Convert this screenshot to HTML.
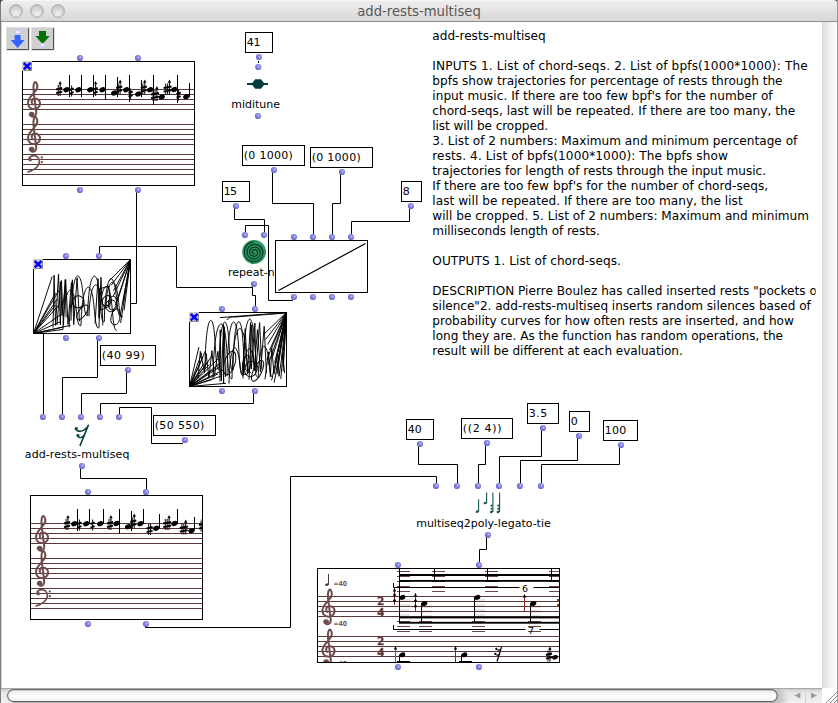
<!DOCTYPE html>
<html><head><meta charset="utf-8"><title>add-rests-multiseq</title>
<style>
html,body{margin:0;padding:0;background:#fff;}
body{width:838px;height:703px;overflow:hidden;}
svg{display:block;}
text{white-space:pre;}
</style></head><body>
<svg width="838" height="703" viewBox="0 0 838 703">
<defs>
<radialGradient id="dg" cx="0.6" cy="0.4" r="0.68">
<stop offset="0" stop-color="#c8c8fb"/><stop offset="0.3" stop-color="#8e8ee9"/><stop offset="0.7" stop-color="#7575d2"/><stop offset="1" stop-color="#6262bd"/>
</radialGradient>
<linearGradient id="tb" x1="0" y1="0" x2="0" y2="1">
<stop offset="0" stop-color="#efefef"/><stop offset="1" stop-color="#d7d7d7"/>
</linearGradient>
<radialGradient id="tl" cx="0.5" cy="0.75" r="0.7">
<stop offset="0" stop-color="#f2f2f2"/><stop offset="1" stop-color="#c4c4c4"/>
</radialGradient>
<linearGradient id="vs" x1="0" y1="0" x2="1" y2="0">
<stop offset="0" stop-color="#dadada"/><stop offset="0.6" stop-color="#f4f4f4"/><stop offset="1" stop-color="#fafafa"/>
</linearGradient>
<linearGradient id="hs" x1="0" y1="0" x2="0" y2="1">
<stop offset="0" stop-color="#c4c4c4"/><stop offset="0.3" stop-color="#e6e6e6"/><stop offset="1" stop-color="#f1f1f1"/>
</linearGradient>
<linearGradient id="pill" x1="0" y1="0" x2="0" y2="1">
<stop offset="0" stop-color="#e4e4e4"/><stop offset="0.3" stop-color="#f4f4f4"/><stop offset="0.55" stop-color="#ffffff"/><stop offset="1" stop-color="#efefef"/>
</linearGradient>
<linearGradient id="cap" x1="0" y1="0" x2="1" y2="0">
<stop offset="0" stop-color="#b4b4b4"/><stop offset="0.45" stop-color="#c6c6c6"/><stop offset="1" stop-color="#ececec"/>
</linearGradient>
<clipPath id="cpTxt"><rect x="425" y="22" width="390.7" height="400"/></clipPath>
<clipPath id="cpS1"><rect x="23" y="62" width="171" height="123"/></clipPath>
<clipPath id="cpS2"><rect x="31" y="496" width="171" height="123"/></clipPath>
<clipPath id="cpV"><rect x="318" y="569" width="241" height="93"/></clipPath>
<clipPath id="cpB1"><rect x="34" y="260" width="97" height="73"/></clipPath>
<clipPath id="cpB2"><rect x="190" y="313" width="97" height="73"/></clipPath>
<clipPath id="cpRn"><rect x="220" y="262" width="54.2" height="20"/></clipPath>
</defs>
<rect x="0" y="0" width="838" height="703" fill="#fff"/>
<rect x="0" y="0" width="838" height="21" fill="url(#tb)"/>
<rect x="0" y="0" width="838" height="1" fill="#f6f6f6"/>
<rect x="0" y="21" width="838" height="1" fill="#8e8e8e"/>
<circle cx="16" cy="11" r="6.3" fill="url(#tl)" stroke="#a9a9a9" stroke-width="1"/>
<circle cx="37" cy="11" r="6.3" fill="url(#tl)" stroke="#a9a9a9" stroke-width="1"/>
<circle cx="58" cy="11" r="6.3" fill="url(#tl)" stroke="#a9a9a9" stroke-width="1"/>
<text x="419" y="15.5" font-family="'DejaVu Sans','Liberation Sans',sans-serif" font-size="13.2" fill="#585858" text-anchor="middle">add-rests-multiseq</text>
<rect x="0" y="0" width="1" height="703" fill="#7c7c7c"/>
<rect x="1" y="22" width="1" height="666" fill="#d8d8d8"/>
<path d="M0 0 H4.5 A4.5 4.5 0 0 0 0 4.5 Z" fill="#444"/>
<path d="M838 0 H833.5 A4.5 4.5 0 0 1 838 4.5 Z" fill="#444"/>
<rect x="822" y="22" width="15" height="666" fill="url(#vs)"/>
<rect x="837" y="0" width="1" height="703" fill="#9a9a9a"/>
<rect x="1" y="688" width="821" height="15" fill="url(#hs)"/>
<rect x="1" y="688" width="821" height="1" fill="#a8a8a8"/>
<path d="M770 689 H783 A7 7 0 0 1 783 703 H770 Z" fill="url(#cap)"/>
<rect x="7.6" y="689.6" width="769.6" height="12" rx="6" ry="6" fill="url(#pill)" stroke="#6e6e6e" stroke-width="1.2"/>
<path d="M13 701.8 H771" stroke="#5c5c5c" stroke-width="0.8" fill="none"/>
<path d="M794.4 695.6 L800.4 692.6 V698.6 Z" fill="#9c9c9c"/>
<path d="M817 695.6 L811 692.6 V698.6 Z" fill="#9c9c9c"/>
<rect x="805" y="689" width="1" height="14" fill="#d4d4d4"/>
<rect x="822" y="688" width="15" height="15" fill="#fff"/>
<path d="M826 703 L837 692" stroke="#8a8a8a" stroke-width="1" fill="none"/>
<path d="M830 703 L837 696" stroke="#8a8a8a" stroke-width="1" fill="none"/>
<path d="M834 703 L837 700" stroke="#8a8a8a" stroke-width="1" fill="none"/>
<rect x="6" y="27" width="24" height="24" fill="#e2e2e2"/>
<rect x="7" y="28" width="22" height="22" fill="#d0d0d0"/>
<path d="M6.5 49.5 V27.5 H28.5" fill="none" stroke="#dedede" stroke-width="1"/>
<path d="M7 49.5 H28.5 V28" fill="none" stroke="#505050" stroke-width="1"/>
<rect x="31" y="27" width="24" height="24" fill="#e2e2e2"/>
<rect x="32" y="28" width="22" height="22" fill="#d0d0d0"/>
<path d="M31.5 49.5 V27.5 H53.5" fill="none" stroke="#dedede" stroke-width="1"/>
<path d="M32 49.5 H53.5 V28" fill="none" stroke="#505050" stroke-width="1"/>
<circle cx="17.6" cy="32" r="2.6" fill="#c9c9ff"/><circle cx="17.6" cy="32" r="1.3" fill="#fff"/>
<path d="M14.6 35 H20.6 V40 H24.6 L17.6 48 L10.6 40 H14.6 Z" fill="#3366ff"/>
<path d="M39 31 H46 V36 H49.8 L42.6 44 L35.4 36 H39 Z" fill="#007300"/>
<circle cx="42.6" cy="45.3" r="2.6" fill="#c9c9ff"/><circle cx="42.6" cy="45.3" r="1.3" fill="#fff"/>
<path d="M136.5 190.5 L136.5 303.5 L43.5 303.5 L43.5 416.5" fill="none" stroke="#000" stroke-width="1" stroke-linejoin="miter" stroke-linecap="square"/>
<path d="M99.5 255.5 L99.5 246.5 L176.5 246.5 L176.5 287.5 L252.5 287.5 L252.5 284.5" fill="none" stroke="#000" stroke-width="1" stroke-linejoin="miter" stroke-linecap="square"/>
<path d="M252.5 287.5 L252.5 295.5 L255.5 295.5 L255.5 308.5" fill="none" stroke="#000" stroke-width="1" stroke-linejoin="miter" stroke-linecap="square"/>
<path d="M234.5 206.5 L234.5 219.5 L264.5 219.5 L264.5 234.5" fill="none" stroke="#000" stroke-width="1" stroke-linejoin="miter" stroke-linecap="square"/>
<path d="M245.5 234.5 L245.5 225.5 L268.5 225.5 L268.5 300.5 L292.5 300.5 L292.5 298.5" fill="none" stroke="#000" stroke-width="1" stroke-linejoin="miter" stroke-linecap="square"/>
<path d="M272.5 170.5 L272.5 203.5 L313.5 203.5 L313.5 236.5" fill="none" stroke="#000" stroke-width="1" stroke-linejoin="miter" stroke-linecap="square"/>
<path d="M340.5 172.5 L340.5 203.5 L332.5 203.5 L332.5 236.5" fill="none" stroke="#000" stroke-width="1" stroke-linejoin="miter" stroke-linecap="square"/>
<path d="M409.5 206.5 L409.5 221.5 L351.5 221.5 L351.5 236.5" fill="none" stroke="#000" stroke-width="1" stroke-linejoin="miter" stroke-linecap="square"/>
<path d="M97.5 338.5 L97.5 377.5 L62.5 377.5 L62.5 416.5" fill="none" stroke="#000" stroke-width="1" stroke-linejoin="miter" stroke-linecap="square"/>
<path d="M126.5 370.5 L126.5 393.5 L81.5 393.5 L81.5 416.5" fill="none" stroke="#000" stroke-width="1" stroke-linejoin="miter" stroke-linecap="square"/>
<path d="M253.5 391.5 L253.5 403.5 L100.5 403.5 L100.5 416.5" fill="none" stroke="#000" stroke-width="1" stroke-linejoin="miter" stroke-linecap="square"/>
<path d="M182.5 443.5 L151.5 443.5 L151.5 407.5 L119.5 407.5 L119.5 416.5" fill="none" stroke="#000" stroke-width="1" stroke-linejoin="miter" stroke-linecap="square"/>
<path d="M80.5 466.5 L80.5 478.5 L146.5 478.5 L146.5 491.5" fill="none" stroke="#000" stroke-width="1" stroke-linejoin="miter" stroke-linecap="square"/>
<path d="M145.5 627.5 L290.5 627.5 L290.5 476.5 L436.5 476.5 L436.5 482.5" fill="none" stroke="#000" stroke-width="1" stroke-linejoin="miter" stroke-linecap="square"/>
<path d="M418.5 444.5 L418.5 464.5 L457.5 464.5 L457.5 482.5" fill="none" stroke="#000" stroke-width="1" stroke-linejoin="miter" stroke-linecap="square"/>
<path d="M485.5 443.5 L485.5 464.5 L478.5 464.5 L478.5 482.5" fill="none" stroke="#000" stroke-width="1" stroke-linejoin="miter" stroke-linecap="square"/>
<path d="M541.5 428.5 L541.5 456.5 L499.5 456.5 L499.5 482.5" fill="none" stroke="#000" stroke-width="1" stroke-linejoin="miter" stroke-linecap="square"/>
<path d="M577.5 436.5 L577.5 460.5 L520.5 460.5 L520.5 482.5" fill="none" stroke="#000" stroke-width="1" stroke-linejoin="miter" stroke-linecap="square"/>
<path d="M619.5 445.5 L619.5 464.5 L541.5 464.5 L541.5 482.5" fill="none" stroke="#000" stroke-width="1" stroke-linejoin="miter" stroke-linecap="square"/>
<path d="M486.5 535.5 L486.5 549.5 L479.5 549.5 L479.5 562.5" fill="none" stroke="#000" stroke-width="1" stroke-linejoin="miter" stroke-linecap="square"/>
<path d="M258.5 61.5 L258.5 62.5" fill="none" stroke="#000" stroke-width="1" stroke-linejoin="miter" stroke-linecap="square"/>
<rect x="245.5" y="32.5" width="27" height="20" fill="#fff" stroke="#000" stroke-width="1"/>
<text x="246.7" y="45.8" font-family="'DejaVu Sans','Liberation Sans',sans-serif" font-size="11" fill="#000" textLength="13.9" lengthAdjust="spacing">41</text>
<rect x="242.5" y="145.5" width="62" height="20" fill="#fff" stroke="#000" stroke-width="1"/>
<text x="243.7" y="158.8" font-family="'DejaVu Sans','Liberation Sans',sans-serif" font-size="11" fill="#000" textLength="49.2" lengthAdjust="spacing">(0 1000)</text>
<rect x="310.5" y="147.5" width="62" height="20" fill="#fff" stroke="#000" stroke-width="1"/>
<text x="311.7" y="160.8" font-family="'DejaVu Sans','Liberation Sans',sans-serif" font-size="11" fill="#000" textLength="49.0" lengthAdjust="spacing">(0 1000)</text>
<rect x="222.5" y="181.5" width="27" height="20" fill="#fff" stroke="#000" stroke-width="1"/>
<text x="223.7" y="194.8" font-family="'DejaVu Sans','Liberation Sans',sans-serif" font-size="11" fill="#000" textLength="13.3" lengthAdjust="spacing">15</text>
<rect x="401.5" y="181.5" width="20" height="20" fill="#fff" stroke="#000" stroke-width="1"/>
<text x="402.7" y="194.8" font-family="'DejaVu Sans','Liberation Sans',sans-serif" font-size="11" fill="#000" textLength="7.8" lengthAdjust="spacing">8</text>
<rect x="100.5" y="345.5" width="55" height="20" fill="#fff" stroke="#000" stroke-width="1"/>
<text x="101.7" y="358.8" font-family="'DejaVu Sans','Liberation Sans',sans-serif" font-size="11" fill="#000" textLength="43.0" lengthAdjust="spacing">(40 99)</text>
<rect x="153.5" y="415.5" width="62" height="20" fill="#fff" stroke="#000" stroke-width="1"/>
<text x="154.7" y="428.8" font-family="'DejaVu Sans','Liberation Sans',sans-serif" font-size="11" fill="#000" textLength="49.6" lengthAdjust="spacing">(50 550)</text>
<rect x="406.5" y="419.5" width="27" height="20" fill="#fff" stroke="#000" stroke-width="1"/>
<text x="407.7" y="432.8" font-family="'DejaVu Sans','Liberation Sans',sans-serif" font-size="11" fill="#000" textLength="14.1" lengthAdjust="spacing">40</text>
<rect x="461.5" y="418.5" width="51" height="20" fill="#fff" stroke="#000" stroke-width="1"/>
<text x="462.7" y="431.8" font-family="'DejaVu Sans','Liberation Sans',sans-serif" font-size="11" fill="#000" textLength="38.9" lengthAdjust="spacing">((2 4))</text>
<rect x="527.5" y="403.5" width="31" height="20" fill="#fff" stroke="#000" stroke-width="1"/>
<text x="528.7" y="416.8" font-family="'DejaVu Sans','Liberation Sans',sans-serif" font-size="11" fill="#000" textLength="18.6" lengthAdjust="spacing">3.5</text>
<rect x="569.5" y="411.5" width="20" height="20" fill="#fff" stroke="#000" stroke-width="1"/>
<text x="570.7" y="424.8" font-family="'DejaVu Sans','Liberation Sans',sans-serif" font-size="11" fill="#000" textLength="7.8" lengthAdjust="spacing">0</text>
<rect x="603.5" y="420.5" width="34" height="20" fill="#fff" stroke="#000" stroke-width="1"/>
<text x="604.7" y="433.8" font-family="'DejaVu Sans','Liberation Sans',sans-serif" font-size="11" fill="#000" textLength="21.5" lengthAdjust="spacing">100</text>
<path d="M247 84 H268" stroke="#003c3c" stroke-width="2" fill="none"/>
<path d="M251.4 84 L255.2 79.2 H261 L264.8 84 L261 88.8 H255.2 Z" fill="#003c3c"/>
<text x="231.2" y="107.7" font-family="'DejaVu Sans','Liberation Sans',sans-serif" font-size="11" fill="#000" text-anchor="start" >miditune</text>
<circle cx="254.1" cy="252" r="11.9" fill="#2f9560"/>
<path d="M254.73 253.42 L254.69 253.45 L254.64 253.49 L254.59 253.52 L254.54 253.55 L254.49 253.58 L254.44 253.60 L254.38 253.63 L254.32 253.65 L254.26 253.67 L254.20 253.68 L254.13 253.69 L254.07 253.70 L254.00 253.71 L253.93 253.71 L253.87 253.71 L253.80 253.71 L253.73 253.70 L253.66 253.69 L253.59 253.68 L253.52 253.66 L253.45 253.64 L253.38 253.62 L253.31 253.59 L253.24 253.56 L253.17 253.52 L253.11 253.49 L253.04 253.44 L252.98 253.40 L252.91 253.35 L252.85 253.30 L252.79 253.24 L252.74 253.18 L252.68 253.12 L252.63 253.06 L252.58 252.99 L252.53 252.92 L252.49 252.84 L252.45 252.77 L252.41 252.69 L252.38 252.60 L252.35 252.52 L252.32 252.43 L252.30 252.35 L252.28 252.26 L252.27 252.17 L252.26 252.07 L252.25 251.98 L252.25 251.88 L252.25 251.79 L252.26 251.69 L252.27 251.60 L252.29 251.50 L252.31 251.40 L252.33 251.31 L252.36 251.21 L252.40 251.12 L252.44 251.02 L252.48 250.93 L252.53 250.84 L252.58 250.75 L252.64 250.66 L252.70 250.57 L252.77 250.49 L252.84 250.41 L252.91 250.33 L252.99 250.25 L253.08 250.18 L253.16 250.11 L253.26 250.05 L253.35 249.99 L253.45 249.93 L253.55 249.87 L253.65 249.83 L253.76 249.78 L253.87 249.74 L253.98 249.71 L254.10 249.68 L254.21 249.65 L254.33 249.63 L254.45 249.62 L254.57 249.61 L254.70 249.60 L254.82 249.61 L254.94 249.61 L255.07 249.63 L255.19 249.65 L255.32 249.67 L255.44 249.70 L255.56 249.74 L255.68 249.78 L255.80 249.83 L255.92 249.88 L256.04 249.94 L256.16 250.01 L256.27 250.08 L256.38 250.16 L256.49 250.24 L256.59 250.33 L256.69 250.42 L256.79 250.52 L256.88 250.62 L256.97 250.73 L257.05 250.84 L257.13 250.95 L257.21 251.07 L257.27 251.20 L257.34 251.33 L257.40 251.46 L257.45 251.59 L257.50 251.73 L257.54 251.87 L257.57 252.02 L257.60 252.16 L257.62 252.31 L257.64 252.46 L257.64 252.61 L257.64 252.76 L257.64 252.91 L257.63 253.06 L257.61 253.22 L257.58 253.37 L257.55 253.52 L257.51 253.67 L257.46 253.82 L257.40 253.97 L257.34 254.12 L257.28 254.26 L257.20 254.40 L257.12 254.54 L257.03 254.68 L256.93 254.81 L256.83 254.94 L256.72 255.06 L256.61 255.18 L256.49 255.30 L256.37 255.41 L256.23 255.51 L256.10 255.61 L255.96 255.70 L255.81 255.79 L255.66 255.87 L255.51 255.95 L255.35 256.02 L255.18 256.08 L255.02 256.13 L254.85 256.18 L254.68 256.22 L254.50 256.25 L254.33 256.27 L254.15 256.29 L253.97 256.30 L253.79 256.29 L253.61 256.29 L253.43 256.27 L253.25 256.25 L253.07 256.21 L252.89 256.17 L252.71 256.12 L252.53 256.06 L252.36 256.00 L252.19 255.92 L252.02 255.84 L251.85 255.75 L251.69 255.65 L251.53 255.55 L251.37 255.43 L251.22 255.31 L251.08 255.18 L250.94 255.05 L250.80 254.91 L250.68 254.76 L250.55 254.61 L250.44 254.45 L250.33 254.28 L250.23 254.11 L250.13 253.93 L250.05 253.75 L249.97 253.56 L249.90 253.37 L249.84 253.18 L249.78 252.98 L249.74 252.78 L249.70 252.58 L249.68 252.38 L249.66 252.17 L249.65 251.96 L249.65 251.75 L249.66 251.54 L249.68 251.33 L249.71 251.12 L249.75 250.91 L249.80 250.71 L249.86 250.50 L249.93 250.30 L250.01 250.10 L250.09 249.90 L250.19 249.70 L250.29 249.51 L250.41 249.32 L250.53 249.14 L250.66 248.96 L250.80 248.79 L250.95 248.62 L251.10 248.46 L251.26 248.31 L251.43 248.16 L251.61 248.02 L251.80 247.89 L251.99 247.77 L252.18 247.65 L252.39 247.55 L252.59 247.45 L252.81 247.36 L253.02 247.28 L253.25 247.21 L253.47 247.15 L253.70 247.10 L253.93 247.06 L254.16 247.03 L254.40 247.01 L254.64 247.00 L254.87 247.00 L255.11 247.01 L255.35 247.04 L255.59 247.07 L255.83 247.12 L256.06 247.17 L256.30 247.24 L256.53 247.32 L256.76 247.40 L256.98 247.50 L257.20 247.61 L257.42 247.73 L257.63 247.86 L257.84 248.00 L258.04 248.14 L258.23 248.30 L258.42 248.47 L258.60 248.64 L258.78 248.83 L258.94 249.02 L259.10 249.22 L259.25 249.43 L259.39 249.64 L259.52 249.86 L259.64 250.09 L259.75 250.33 L259.85 250.57 L259.94 250.81 L260.02 251.06 L260.08 251.31 L260.14 251.57 L260.19 251.83 L260.22 252.09 L260.24 252.36 L260.25 252.62 L260.25 252.89 L260.24 253.16 L260.21 253.42 L260.17 253.69 L260.12 253.96 L260.06 254.22 L259.99 254.48 L259.90 254.74 L259.80 255.00 L259.69 255.25 L259.57 255.49 L259.44 255.74 L259.30 255.97 L259.14 256.21 L258.98 256.43 L258.80 256.65 L258.62 256.86 L258.42 257.06 L258.22 257.25 L258.00 257.44 L257.78 257.61 L257.55 257.78 L257.31 257.94 L257.07 258.08 L256.81 258.22 L256.55 258.34 L256.29 258.45 L256.02 258.55 L255.74 258.64 L255.46 258.72 L255.17 258.78 L254.88 258.83 L254.59 258.87 L254.30 258.89 L254.01 258.91 L253.71 258.90 L253.41 258.89 L253.12 258.86 L252.82 258.82 L252.53 258.77 L252.23 258.70 L251.94 258.62 L251.66 258.52 L251.38 258.42 L251.10 258.30 L250.82 258.16 L250.55 258.02 L250.29 257.86 L250.04 257.69 L249.79 257.51 L249.55 257.32 L249.32 257.11 L249.09 256.90 L248.88 256.67 L248.67 256.44 L248.48 256.19 L248.29 255.94 L248.12 255.68 L247.96 255.41 L247.81 255.13 L247.67 254.84 L247.55 254.55 L247.44 254.25 L247.34 253.95 L247.26 253.64 L247.18 253.33 L247.13 253.01 L247.08 252.69 L247.06 252.37 L247.04 252.05 L247.04 251.72 L247.06 251.39 L247.08 251.07 L247.13 250.74 L247.19 250.42 L247.26 250.10 L247.35 249.78 L247.45 249.47 L247.57 249.16 L247.70 248.85 L247.84 248.55 L248.00 248.26 L248.17 247.97 L248.35 247.69 L248.55 247.42 L248.76 247.15 L248.98 246.90 L249.22 246.65 L249.46 246.42 L249.72 246.19 L249.99 245.98 L250.26 245.78 L250.55 245.59 L250.84 245.41 L251.15 245.24 L251.46 245.09 L251.77 244.96 L252.10 244.83 L252.43 244.72 L252.77 244.63 L253.11 244.55 L253.45 244.49 L253.80 244.44 L254.15 244.41 L254.50 244.39 L254.86 244.39 L255.21 244.40 L255.57 244.43 L255.92 244.48 L256.27 244.54 L256.62 244.62 L256.97 244.71 L257.31 244.82 L257.65 244.94 L257.98 245.08 L258.31 245.24 L258.63 245.41 L258.94 245.59 L259.25 245.79 L259.55 246.01 L259.83 246.23 L260.11 246.47 L260.38 246.72 L260.64 246.99 L260.88 247.27 L261.12 247.55 L261.34 247.85 L261.54 248.16 L261.74 248.48 L261.92 248.81 L262.08 249.14 L262.23 249.49 L262.37 249.84 L262.49 250.20 L262.59 250.56 L262.68 250.93 L262.75 251.30 L262.81 251.68 L262.84 252.06 L262.86 252.44 L262.87 252.82 L262.85 253.21 L262.82 253.59 L262.78 253.97 L262.71 254.35 L262.63 254.73 L262.53 255.11 L262.41 255.48 L262.28 255.84 L262.13 256.20 L261.97 256.56 L261.79 256.91 L261.59 257.25 L261.38 257.58 L261.15 257.90 L260.90 258.21 L260.65 258.51 L260.38 258.80 L260.09 259.08 L259.80 259.35 L259.49 259.60 L259.17 259.84 L258.83 260.07 L258.49 260.28 L258.14 260.47 L257.78 260.65 L257.41 260.82 L257.03 260.97 L256.65 261.10 L256.26 261.21 L255.86 261.31 L255.46 261.39 L255.06 261.45 L254.65 261.49 L254.24 261.52 L253.83 261.52 L253.41 261.51 L253.00 261.48 L252.59 261.43 L252.18 261.36 L251.77 261.28 L251.37 261.17 L250.97 261.05 L250.57 260.91 L250.19 260.75 L249.80 260.58 L249.43 260.39 L249.06 260.18 L248.71 259.95 L248.36 259.71 L248.02 259.45 L247.70 259.18 L247.38 258.89 L247.08 258.58 L246.79 258.27 L246.52 257.94 L246.26 257.60 L246.02 257.24 L245.79 256.88 L245.58 256.50 L245.38 256.11 L245.20 255.72 L245.04 255.32 L244.90 254.90 L244.77 254.49 L244.67 254.06 L244.58 253.63 L244.51 253.20 L244.46 252.76 L244.43 252.33 L244.42 251.88 L244.43 251.44 L244.46 251.00 L244.51 250.56 L244.58 250.12 L244.67 249.69 L244.78 249.25 L244.91 248.83 L245.05 248.40 L245.22 247.99 L245.40 247.58 L245.61 247.18 L245.83 246.78 L246.07 246.40 L246.33 246.03 L246.60 245.66 L246.89 245.32 L247.19 244.98 L247.52 244.65 L247.85 244.35 L248.20 244.05 L248.57 243.77 L248.94 243.51 L249.33 243.26 L249.73 243.03 L250.14 242.82 L250.56 242.63 L250.99 242.45 L251.43 242.30 L251.87 242.16 L252.32 242.04 L252.78 241.95 L253.24 241.87 L253.71 241.82" fill="none" stroke="#063a20" stroke-width="1.25"/>
<path d="M251.2 262.6 l1.6 1.4" stroke="#083c22" stroke-width="1"/>
<g clip-path="url(#cpRn)"><text x="228" y="275.6" font-family="'DejaVu Sans','Liberation Sans',sans-serif" font-size="11" fill="#000">repeat-n</text></g>
<rect x="275.5" y="240.5" width="92" height="52" fill="#fff" stroke="#000" stroke-width="1"/>
<path d="M278.5 290.5 L365.5 243.5" stroke="#000" stroke-width="1.2" fill="none"/>
<rect x="33.5" y="259.5" width="97" height="74" fill="#fff" stroke="#000" stroke-width="1"/>
<g clip-path="url(#cpB1)" fill="none" stroke="#000" stroke-width="0.95" stroke-linejoin="round">
<path d="M33.5 333.5 L52.2 276.5 M33.5 333.5 L55.6 292.9 M33.5 333.5 L57.5 298.8 M33.5 333.5 L58.1 305.9 M33.5 333.5 L58.9 290.3 M33.5 333.5 L62.8 327.2 M33.5 333.5 L60.9 321.5 M33.5 333.5 L60.1 315.1 M33.5 333.5 L63.0 329.4 M33.5 333.5 L55.6 304.8 M33.5 333.5 L70.5 325.3 M130.5 259.5 L108.6 281.3 M130.5 259.5 L111.2 285.3 M130.5 259.5 L113.0 296.7 M130.5 259.5 L115.4 305.4 M130.5 259.5 L120.0 316.7 M130.5 259.5 L120.6 322.9 M130.5 259.5 L124.1 310.4 M130.5 259.5 L117.4 300.9 M130.5 259.5 L113.4 290.9 M130.5 259.5 L122.8 303.6 "/>
<path d="M53.0 327.6 L54.1 275.2 L55.6 325.4 L58.5 274.0 L60.4 324.9 L61.4 280.5 L63.5 325.2 L65.2 279.6 L66.1 317.3 "/>
<path d="M57.0 324.9 L60.5 281.8 L62.0 315.5 L65.7 279.6 L68.0 324.4 L71.4 282.6 L74.4 315.9 "/>
<path d="M69.0 327.3 L72.4 279.8 L73.7 324.7 L77.1 277.9 L79.5 321.4 "/>
<path d="M71.0 320.7 C71.8 275.2 77.7 273.2 79.3 277.2 C84.3 283.2 82.7 318.5 87.7 315.5 C88.5 275.5 94.3 273.5 96.0 277.5 C101.0 283.5 99.3 324.6 104.3 321.6 C105.2 278.1 111.0 276.1 112.7 280.1 C117.7 286.1 116.0 318.8 121.0 315.8 "/>
<path d="M63.0 329.3 C63.9 289.6 70.2 287.6 72.0 291.6 C77.4 297.6 75.6 328.5 81.0 325.5 C81.9 286.6 88.2 284.6 90.0 288.6 C95.4 294.6 93.6 330.8 99.0 327.8 C99.9 285.9 106.2 283.9 108.0 287.9 C113.4 293.9 111.6 333.2 117.0 330.2 "/>
<path d="M89.0 316.3 C89.8 284.4 95.8 282.4 97.5 286.4 C102.6 292.4 100.9 310.0 106.0 307.0 C106.8 281.8 112.8 279.8 114.5 283.8 C119.6 289.8 117.9 319.5 123.0 316.5 "/>
<ellipse cx="112.5" cy="303.0" rx="4.1" ry="6.9" transform="rotate(7 112.5 303.0)"/>
<ellipse cx="106.7" cy="300.7" rx="4.2" ry="5.4" transform="rotate(29 106.7 300.7)"/>
<ellipse cx="78.2" cy="301.8" rx="5.9" ry="6.0" transform="rotate(16 78.2 301.8)"/>
<ellipse cx="111.2" cy="305.9" rx="5.7" ry="5.9" transform="rotate(-5 111.2 305.9)"/>
<ellipse cx="82.4" cy="312.3" rx="3.7" ry="8.6" transform="rotate(35 82.4 312.3)"/>
<path d="M95.0 323.6 L98.0 278.6 L99.0 318.2 L101.0 277.3 L102.8 325.2 "/>
<path d="M113 311 q6 -6 7 4 q0 10 -6 10 q-6 -2 -1 -14"/>
<path d="M99 289 l10 -3 l1 20 l-9 4 Z"/>
</g>
<rect x="33" y="259" width="10" height="10" fill="#cdcdcd"/>
<path d="M42.5 260 V268.5 H34" stroke="#8c8c8c" stroke-width="1" fill="none"/>
<path d="M34.7 261 L41.5 267.3 M41.5 261 L34.7 267.3" stroke="#0000ff" stroke-width="2.5" fill="none"/>
<rect x="189.5" y="312.5" width="97" height="74" fill="#fff" stroke="#000" stroke-width="1"/>
<g clip-path="url(#cpB2)" fill="none" stroke="#000" stroke-width="0.95" stroke-linejoin="round">
<path d="M189.5 386.5 L198.9 347.1 M189.5 386.5 L201.8 352.9 M189.5 386.5 L203.0 357.2 M189.5 386.5 L205.4 351.0 M189.5 386.5 L208.3 361.6 M189.5 386.5 L209.2 364.6 M189.5 386.5 L212.2 355.6 M189.5 386.5 L215.4 368.1 M189.5 386.5 L218.0 373.9 M189.5 386.5 L220.3 363.2 M189.5 386.5 L221.3 376.0 M189.5 386.5 L223.1 370.1 M189.5 386.5 L220.4 366.5 M189.5 386.5 L218.1 358.9 M189.5 386.5 L211.9 379.7 M189.5 386.5 L226.0 383.3 M189.5 386.5 L204.0 363.3 M286.5 312.5 L219.9 317.6 M286.5 312.5 L264.0 334.0 M286.5 312.5 L265.7 339.4 M286.5 312.5 L267.6 344.5 M286.5 312.5 L269.6 350.1 M286.5 312.5 L272.5 356.8 M286.5 312.5 L274.7 362.8 M286.5 312.5 L276.9 369.7 M286.5 312.5 L277.0 374.4 M286.5 312.5 L280.8 378.9 M286.5 312.5 L283.0 366.8 M286.5 312.5 L283.1 371.3 M286.5 312.5 L271.6 380.5 M286.5 312.5 L274.2 382.7 M286.5 312.5 L266.9 359.5 M286.5 312.5 L268.2 364.5 M286.5 312.5 L278.2 352.1 M286.5 312.5 L281.6 358.4 "/>
<path d="M205.0 368.6 C205.7 319.7 210.6 317.7 212.0 321.7 C216.2 327.7 214.8 372.7 219.0 369.7 C219.7 321.4 224.6 319.4 226.0 323.4 C230.2 329.4 228.8 373.4 233.0 370.4 C233.7 320.9 238.6 318.9 240.0 322.9 C244.2 328.9 242.8 373.6 247.0 370.6 "/>
<path d="M213.0 379.5 C213.9 323.3 220.6 321.3 222.5 325.3 C228.2 331.3 226.3 381.8 232.0 378.8 C232.9 327.8 239.6 325.8 241.5 329.8 C247.2 335.8 245.3 375.4 251.0 372.4 "/>
<path d="M227.0 376.2 C227.8 321.3 233.4 319.3 235.0 323.3 C239.8 329.3 238.2 378.5 243.0 375.5 C243.8 318.4 249.4 316.4 251.0 320.4 C255.8 326.4 254.2 370.7 259.0 367.7 "/>
<path d="M220.0 381.4 L220.2 329.9 L221.4 380.9 L223.5 324.6 L223.6 383.1 L224.2 326.7 L225.5 376.8 "/>
<path d="M243.0 378.5 L245.2 328.7 L247.5 373.1 L250.5 322.5 L251.3 369.1 L254.9 323.0 L255.9 371.1 L259.6 322.6 L261.9 369.4 "/>
<path d="M249.0 379.6 L251.8 324.8 L254.1 370.4 L257.5 329.6 L260.5 372.1 L264.2 326.3 L266.4 373.4 "/>
<path d="M198.0 377.8 L200.3 351.4 L204.5 372.5 L206.2 353.5 L208.9 377.9 L211.9 350.7 L214.4 376.4 L217.9 351.4 L220.3 374.7 "/>
<path d="M265.0 379.3 L268.5 351.9 L270.4 376.7 L271.8 348.2 L274.0 373.8 L277.9 353.8 L279.0 376.3 L282.5 352.4 L284.6 373.0 "/>
<ellipse cx="229.6" cy="363.1" rx="5.4" ry="12.2" transform="rotate(17 229.6 363.1)"/>
<ellipse cx="250.9" cy="369.0" rx="6.2" ry="7.8" transform="rotate(13 250.9 369.0)"/>
<ellipse cx="257.6" cy="370.9" rx="4.2" ry="11.3" transform="rotate(25 257.6 370.9)"/>
<ellipse cx="246.5" cy="365.0" rx="4.0" ry="9.7" transform="rotate(8 246.5 365.0)"/>
<path d="M229.0 383.6 C229.7 347.2 234.9 345.2 236.3 349.2 C240.7 355.2 239.3 377.1 243.7 374.1 C244.4 348.4 249.5 346.4 251.0 350.4 C255.4 356.4 253.9 379.7 258.3 376.7 C259.1 345.9 264.2 343.9 265.7 347.9 C270.1 353.9 268.6 379.6 273.0 376.6 "/>
<path d="M227 320 q2 -4 8 -3 L286 313"/>
</g>
<rect x="189" y="312" width="10" height="10" fill="#cdcdcd"/>
<path d="M198.5 313 V321.5 H190" stroke="#8c8c8c" stroke-width="1" fill="none"/>
<path d="M190.7 314 L197.5 320.3 M197.5 314 L190.7 320.3" stroke="#0000ff" stroke-width="2.5" fill="none"/>
<path d="M88.3 425.3 L80.2 445.3" stroke="#073f3f" stroke-width="1.7" stroke-linecap="round" fill="none"/>
<path d="M75.6 428.6 C77.5 432.5 82.5 432.2 87 427.5" stroke="#073f3f" stroke-width="1.5" fill="none" stroke-linecap="round"/>
<path d="M77.2 435.2 C79 438.8 82 438.2 84.3 435.2" stroke="#073f3f" stroke-width="1.4" fill="none" stroke-linecap="round"/>
<circle cx="76.3" cy="428.6" r="1.6" fill="#073f3f"/><circle cx="78" cy="435.4" r="1.5" fill="#073f3f"/>
<text x="24.8" y="457.9" font-family="'DejaVu Sans','Liberation Sans',sans-serif" font-size="11" fill="#000" text-anchor="start" textLength="104.6" lengthAdjust="spacing">add-rests-multiseq</text>
<path d="M478.6 499.3 V511.8" stroke="#155750" stroke-width="1.1" fill="none"/>
<ellipse cx="477.20000000000005" cy="511.6" rx="1.7" ry="1.2" fill="#155750" transform="rotate(-25 477.20000000000005 511.6)"/>
<path d="M486.6 492.5 V503.2" stroke="#155750" stroke-width="1.1" fill="none"/>
<ellipse cx="485.20000000000005" cy="503.0" rx="1.7" ry="1.2" fill="#155750" transform="rotate(-25 485.20000000000005 503.0)"/>
<path d="M492.9 492.5 V512" stroke="#155750" stroke-width="1.1" fill="none"/>
<ellipse cx="491.5" cy="511.8" rx="1.7" ry="1.2" fill="#155750" transform="rotate(-25 491.5 511.8)"/>
<circle cx="491.59999999999997" cy="508.8" r="1.05" fill="#155750"/>
<circle cx="491.59999999999997" cy="505.6" r="1.05" fill="#155750"/>
<path d="M499.6 492.5 V512" stroke="#155750" stroke-width="1.1" fill="none"/>
<ellipse cx="498.20000000000005" cy="511.8" rx="1.7" ry="1.2" fill="#155750" transform="rotate(-25 498.20000000000005 511.8)"/>
<circle cx="498.3" cy="508.8" r="1.05" fill="#155750"/>
<circle cx="498.3" cy="505.6" r="1.05" fill="#155750"/>
<text x="416.2" y="526.9" font-family="'DejaVu Sans','Liberation Sans',sans-serif" font-size="11" fill="#000" text-anchor="start" >multiseq2poly-legato-tie</text>
<rect x="22.5" y="61.5" width="172" height="124" fill="#fff" stroke="#000" stroke-width="1"/>
<rect x="23" y="89" width="171" height="1" fill="#5a3838"/>
<rect x="23" y="94" width="171" height="1" fill="#5a3838"/>
<rect x="23" y="99" width="171" height="1" fill="#5a3838"/>
<rect x="23" y="104" width="171" height="1" fill="#5a3838"/>
<rect x="23" y="109" width="171" height="1" fill="#5a3838"/>
<rect x="23" y="124" width="171" height="1" fill="#5a3838"/>
<rect x="23" y="129" width="171" height="1" fill="#5a3838"/>
<rect x="23" y="134" width="171" height="1" fill="#5a3838"/>
<rect x="23" y="139" width="171" height="1" fill="#5a3838"/>
<rect x="23" y="144" width="171" height="1" fill="#5a3838"/>
<rect x="23" y="154" width="171" height="1" fill="#5a3838"/>
<rect x="23" y="159" width="171" height="1" fill="#5a3838"/>
<rect x="23" y="164" width="171" height="1" fill="#5a3838"/>
<rect x="23" y="169" width="171" height="1" fill="#5a3838"/>
<rect x="23" y="174" width="171" height="1" fill="#5a3838"/>
<g transform="translate(27.0 81) scale(1.08 1.0)" fill="none" stroke="#6e4c4c" stroke-width="1.9" stroke-linecap="round"><path d="M5.5 23.5 C3.5 22 4 17.5 7.5 17.5 C11 17.5 12.5 21 12 23.5 C11.5 27 8 28.5 5.5 28 C2 27.5 0.5 24 1 21 C1.5 17 5 13.5 7.5 10.5 C9.5 8 10 5 9 2.5 C8.5 1 7.5 0.5 7 1.5 C5.5 4 5.8 8 6.3 12 L8.5 31 C9 34.5 7 36.5 4.5 35.5"/><circle cx="4.3" cy="33.4" r="1.7" fill="#6e4c4c"/></g>
<g transform="translate(27.0 116) scale(1.08 1.0)" fill="none" stroke="#6e4c4c" stroke-width="1.9" stroke-linecap="round"><path d="M5.5 23.5 C3.5 22 4 17.5 7.5 17.5 C11 17.5 12.5 21 12 23.5 C11.5 27 8 28.5 5.5 28 C2 27.5 0.5 24 1 21 C1.5 17 5 13.5 7.5 10.5 C9.5 8 10 5 9 2.5 C8.5 1 7.5 0.5 7 1.5 C5.5 4 5.8 8 6.3 12 L8.5 31 C9 34.5 7 36.5 4.5 35.5"/><circle cx="4.3" cy="33.4" r="1.7" fill="#6e4c4c"/></g>
<g transform="translate(27.5 155)" fill="none" stroke="#6e4c4c" stroke-linecap="round"><path d="M1.5 4.5 C1.5 0.8 7 -0.5 10 2 C13 4.8 12.3 9.5 9 12.5 C6.5 15 3.5 16 0.5 17" stroke-width="1.7"/><circle cx="2.8" cy="4.8" r="1.7" fill="#6e4c4c" stroke="none"/><circle cx="14.3" cy="2.4" r="1.15" fill="#6e4c4c" stroke="none"/><circle cx="14.3" cy="7.2" r="1.15" fill="#6e4c4c" stroke="none"/></g>
<g clip-path="url(#cpS1)">
<path d="M58.25 85.0 V96.0 M60.15 85.0 V96.0 " stroke="#1c0c18" stroke-width="1.05" fill="none"/>
<path d="M56.15 89.5 L62.25 88.0 M56.15 93.1 L62.25 91.6" stroke="#000" stroke-width="1.9" fill="none"/>
<path d="M60.15 80.9 l-1.7 3.4 h3.4 Z" fill="#000"/>
<path d="M60.15 83.5 V85.5" stroke="#000" stroke-width="0.9"/>
<rect x="69" y="75" width="1" height="22" fill="#000"/>
<ellipse cx="66.4" cy="89.8" rx="3.2" ry="2.45" fill="#000" transform="rotate(-24 66.4 89.8)"/>
<path d="M71.60 85.5 V96.5 " stroke="#1c0c18" stroke-width="1.05" fill="none"/>
<path d="M69.50 90.0 L73.70 88.5 M69.50 93.6 L73.70 92.1" stroke="#000" stroke-width="1.9" fill="none"/>
<rect x="81" y="75" width="1" height="22" fill="#000"/>
<ellipse cx="78.3" cy="89.8" rx="3.2" ry="2.45" fill="#000" transform="rotate(-24 78.3 89.8)"/>
<rect x="93" y="75" width="1" height="22" fill="#000"/>
<ellipse cx="90.2" cy="89.8" rx="3.2" ry="2.45" fill="#000" transform="rotate(-24 90.2 89.8)"/>
<path d="M95.60 85.0 V96.0 " stroke="#1c0c18" stroke-width="1.05" fill="none"/>
<path d="M93.50 89.5 L97.70 88.0 M93.50 93.1 L97.70 91.6" stroke="#000" stroke-width="1.9" fill="none"/>
<path d="M95.60 80.9 l-1.7 3.4 h3.4 Z" fill="#000"/>
<path d="M95.60 83.5 V85.5" stroke="#000" stroke-width="0.9"/>
<rect x="105" y="75" width="1" height="25" fill="#000"/>
<ellipse cx="102.4" cy="89.8" rx="3.2" ry="2.45" fill="#000" transform="rotate(-24 102.4 89.8)"/>
<rect x="117" y="77" width="1" height="20" fill="#000"/>
<ellipse cx="114.2" cy="93" rx="3.2" ry="2.45" fill="#000" transform="rotate(-24 114.2 93)"/>
<path d="M118.25 83.5 V94.5 M120.15 83.5 V94.5 " stroke="#1c0c18" stroke-width="1.05" fill="none"/>
<path d="M116.15 88.0 L122.25 86.5 M116.15 91.6 L122.25 90.1" stroke="#000" stroke-width="1.9" fill="none"/>
<path d="M120.15 79.4 l-1.7 3.4 h3.4 Z" fill="#000"/>
<path d="M120.15 82 V84" stroke="#000" stroke-width="0.9"/>
<rect x="129" y="75" width="1" height="27" fill="#000"/>
<ellipse cx="126.2" cy="89.8" rx="3.2" ry="2.45" fill="#000" transform="rotate(-24 126.2 89.8)"/>
<path d="M130.60 88.5 V99.5 " stroke="#1c0c18" stroke-width="1.05" fill="none"/>
<path d="M128.50 93.0 L132.70 91.5 M128.50 96.6 L132.70 95.1" stroke="#000" stroke-width="1.9" fill="none"/>
<rect x="141" y="80" width="1" height="17" fill="#000"/>
<ellipse cx="138.2" cy="94" rx="3.2" ry="2.45" fill="#000" transform="rotate(-24 138.2 94)"/>
<path d="M142.85 83.5 V94.5 M144.75 83.5 V94.5 " stroke="#1c0c18" stroke-width="1.05" fill="none"/>
<path d="M140.75 88.0 L146.85 86.5 M140.75 91.6 L146.85 90.1" stroke="#000" stroke-width="1.9" fill="none"/>
<path d="M144.75 79.4 l-1.7 3.4 h3.4 Z" fill="#000"/>
<path d="M144.75 82 V84" stroke="#000" stroke-width="0.9"/>
<rect x="153" y="75" width="1" height="30" fill="#000"/>
<ellipse cx="150.1" cy="89.8" rx="3.2" ry="2.45" fill="#000" transform="rotate(-24 150.1 89.8)"/>
<path d="M153.10 90.0 V101.0 M155.00 90.0 V101.0 M156.90 90.0 V101.0 " stroke="#1c0c18" stroke-width="1.05" fill="none"/>
<path d="M151.00 94.5 L159.00 93.0 M151.00 98.1 L159.00 96.6" stroke="#000" stroke-width="1.9" fill="none"/>
<path d="M156.90 85.9 l-1.7 3.4 h3.4 Z" fill="#000"/>
<path d="M156.90 88.5 V90.5" stroke="#000" stroke-width="0.9"/>
<rect x="165" y="97" width="1" height="0" fill="#000"/>
<ellipse cx="161.8" cy="97" rx="3.2" ry="2.45" fill="#000" transform="rotate(-24 161.8 97)"/>
<path d="M165.70 83.5 V94.5 M167.60 83.5 V94.5 M169.50 83.5 V94.5 " stroke="#1c0c18" stroke-width="1.05" fill="none"/>
<path d="M163.60 88.0 L171.60 86.5 M163.60 91.6 L171.60 90.1" stroke="#000" stroke-width="1.9" fill="none"/>
<path d="M169.50 79.4 l-1.7 3.4 h3.4 Z" fill="#000"/>
<path d="M169.50 82 V84" stroke="#000" stroke-width="0.9"/>
<rect x="177" y="75" width="1" height="28" fill="#000"/>
<ellipse cx="174.3" cy="89.5" rx="3.2" ry="2.45" fill="#000" transform="rotate(-24 174.3 89.5)"/>
<path d="M178.60 89.5 V100.5 " stroke="#1c0c18" stroke-width="1.05" fill="none"/>
<path d="M176.50 94.0 L180.70 92.5 M176.50 97.6 L180.70 96.1" stroke="#000" stroke-width="1.9" fill="none"/>
<rect x="189" y="83" width="1" height="14" fill="#000"/>
<ellipse cx="186.2" cy="96.8" rx="3.2" ry="2.45" fill="#000" transform="rotate(-24 186.2 96.8)"/>
</g>
<rect x="22" y="61" width="10" height="10" fill="#cdcdcd"/>
<path d="M31.5 62 V70.5 H23" stroke="#8c8c8c" stroke-width="1" fill="none"/>
<path d="M23.7 63 L30.5 69.3 M30.5 63 L23.7 69.3" stroke="#0000ff" stroke-width="2.5" fill="none"/>
<rect x="30.5" y="495.5" width="172" height="124" fill="#fff" stroke="#000" stroke-width="1"/>
<rect x="31" y="523" width="171" height="1" fill="#5a3838"/>
<rect x="31" y="528" width="171" height="1" fill="#5a3838"/>
<rect x="31" y="533" width="171" height="1" fill="#5a3838"/>
<rect x="31" y="538" width="171" height="1" fill="#5a3838"/>
<rect x="31" y="543" width="171" height="1" fill="#5a3838"/>
<rect x="31" y="558" width="171" height="1" fill="#5a3838"/>
<rect x="31" y="563" width="171" height="1" fill="#5a3838"/>
<rect x="31" y="568" width="171" height="1" fill="#5a3838"/>
<rect x="31" y="573" width="171" height="1" fill="#5a3838"/>
<rect x="31" y="578" width="171" height="1" fill="#5a3838"/>
<rect x="31" y="588" width="171" height="1" fill="#5a3838"/>
<rect x="31" y="593" width="171" height="1" fill="#5a3838"/>
<rect x="31" y="598" width="171" height="1" fill="#5a3838"/>
<rect x="31" y="603" width="171" height="1" fill="#5a3838"/>
<rect x="31" y="608" width="171" height="1" fill="#5a3838"/>
<g transform="translate(35.0 515) scale(1.08 1.0)" fill="none" stroke="#6e4c4c" stroke-width="1.9" stroke-linecap="round"><path d="M5.5 23.5 C3.5 22 4 17.5 7.5 17.5 C11 17.5 12.5 21 12 23.5 C11.5 27 8 28.5 5.5 28 C2 27.5 0.5 24 1 21 C1.5 17 5 13.5 7.5 10.5 C9.5 8 10 5 9 2.5 C8.5 1 7.5 0.5 7 1.5 C5.5 4 5.8 8 6.3 12 L8.5 31 C9 34.5 7 36.5 4.5 35.5"/><circle cx="4.3" cy="33.4" r="1.7" fill="#6e4c4c"/></g>
<g transform="translate(35.0 550) scale(1.08 1.0)" fill="none" stroke="#6e4c4c" stroke-width="1.9" stroke-linecap="round"><path d="M5.5 23.5 C3.5 22 4 17.5 7.5 17.5 C11 17.5 12.5 21 12 23.5 C11.5 27 8 28.5 5.5 28 C2 27.5 0.5 24 1 21 C1.5 17 5 13.5 7.5 10.5 C9.5 8 10 5 9 2.5 C8.5 1 7.5 0.5 7 1.5 C5.5 4 5.8 8 6.3 12 L8.5 31 C9 34.5 7 36.5 4.5 35.5"/><circle cx="4.3" cy="33.4" r="1.7" fill="#6e4c4c"/></g>
<g transform="translate(35.5 589)" fill="none" stroke="#6e4c4c" stroke-linecap="round"><path d="M1.5 4.5 C1.5 0.8 7 -0.5 10 2 C13 4.8 12.3 9.5 9 12.5 C6.5 15 3.5 16 0.5 17" stroke-width="1.7"/><circle cx="2.8" cy="4.8" r="1.7" fill="#6e4c4c" stroke="none"/><circle cx="14.3" cy="2.4" r="1.15" fill="#6e4c4c" stroke="none"/><circle cx="14.3" cy="7.2" r="1.15" fill="#6e4c4c" stroke="none"/></g>
<g clip-path="url(#cpS2)">
<path d="M66.05 519.0 V530.0 M67.95 519.0 V530.0 " stroke="#1c0c18" stroke-width="1.05" fill="none"/>
<path d="M63.95 523.5 L70.05 522.0 M63.95 527.1 L70.05 525.6" stroke="#000" stroke-width="1.9" fill="none"/>
<path d="M67.95 514.9 l-1.7 3.4 h3.4 Z" fill="#000"/>
<path d="M67.95 517.5 V519.5" stroke="#000" stroke-width="0.9"/>
<rect x="77" y="509" width="1" height="22" fill="#000"/>
<ellipse cx="74.2" cy="523.7" rx="3.2" ry="2.45" fill="#000" transform="rotate(-24 74.2 523.7)"/>
<path d="M79.40 519.5 V530.5 " stroke="#1c0c18" stroke-width="1.05" fill="none"/>
<path d="M77.30 524.0 L81.50 522.5 M77.30 527.6 L81.50 526.1" stroke="#000" stroke-width="1.9" fill="none"/>
<rect x="89" y="509" width="1" height="15" fill="#000"/>
<ellipse cx="86.2" cy="523.7" rx="3.2" ry="2.45" fill="#000" transform="rotate(-24 86.2 523.7)"/>
<path d="M92.60 519.5 V530.5 " stroke="#1c0c18" stroke-width="1.05" fill="none"/>
<path d="M90.50 524.0 L94.70 522.5 M90.50 527.6 L94.70 526.1" stroke="#000" stroke-width="1.9" fill="none"/>
<rect x="103" y="509" width="1" height="15" fill="#000"/>
<ellipse cx="100.2" cy="523.7" rx="3.2" ry="2.45" fill="#000" transform="rotate(-24 100.2 523.7)"/>
<path d="M109.05 519.0 V530.0 M110.95 519.0 V530.0 " stroke="#1c0c18" stroke-width="1.05" fill="none"/>
<path d="M106.95 523.5 L113.05 522.0 M106.95 527.1 L113.05 525.6" stroke="#000" stroke-width="1.9" fill="none"/>
<path d="M110.95 514.9 l-1.7 3.4 h3.4 Z" fill="#000"/>
<path d="M110.95 517.5 V519.5" stroke="#000" stroke-width="0.9"/>
<rect x="119" y="509" width="1" height="25" fill="#000"/>
<ellipse cx="116.4" cy="523.5" rx="3.2" ry="2.45" fill="#000" transform="rotate(-24 116.4 523.5)"/>
<rect x="131" y="511" width="1" height="20" fill="#000"/>
<ellipse cx="128.1" cy="526.7" rx="3.2" ry="2.45" fill="#000" transform="rotate(-24 128.1 526.7)"/>
<path d="M132.35 517.5 V528.5 M134.25 517.5 V528.5 " stroke="#1c0c18" stroke-width="1.05" fill="none"/>
<path d="M130.25 522.0 L136.35 520.5 M130.25 525.6 L136.35 524.1" stroke="#000" stroke-width="1.9" fill="none"/>
<path d="M134.25 513.4 l-1.7 3.4 h3.4 Z" fill="#000"/>
<path d="M134.25 516 V518" stroke="#000" stroke-width="0.9"/>
<rect x="143" y="509" width="1" height="15" fill="#000"/>
<ellipse cx="140.3" cy="523.7" rx="3.2" ry="2.45" fill="#000" transform="rotate(-24 140.3 523.7)"/>
<path d="M148.65 524.0 V535.0 M150.55 524.0 V535.0 " stroke="#1c0c18" stroke-width="1.05" fill="none"/>
<path d="M146.55 528.5 L152.65 527.0 M146.55 532.1 L152.65 530.6" stroke="#000" stroke-width="1.9" fill="none"/>
<rect x="159" y="514" width="1" height="14" fill="#000"/>
<ellipse cx="156.2" cy="528.3" rx="3.2" ry="2.45" fill="#000" transform="rotate(-24 156.2 528.3)"/>
<path d="M165.30 519.0 V530.0 M167.20 519.0 V530.0 M169.10 519.0 V530.0 " stroke="#1c0c18" stroke-width="1.05" fill="none"/>
<path d="M163.20 523.5 L171.20 522.0 M163.20 527.1 L171.20 525.6" stroke="#000" stroke-width="1.9" fill="none"/>
<path d="M169.10 514.9 l-1.7 3.4 h3.4 Z" fill="#000"/>
<path d="M169.10 517.5 V519.5" stroke="#000" stroke-width="0.9"/>
<rect x="177" y="509" width="1" height="15" fill="#000"/>
<ellipse cx="174.4" cy="523.5" rx="3.2" ry="2.45" fill="#000" transform="rotate(-24 174.4 523.5)"/>
<path d="M181.90 523.5 V534.5 M183.80 523.5 V534.5 M185.70 523.5 V534.5 " stroke="#1c0c18" stroke-width="1.05" fill="none"/>
<path d="M179.80 528.0 L187.80 526.5 M179.80 531.6 L187.80 530.1" stroke="#000" stroke-width="1.9" fill="none"/>
<path d="M185.70 519.4 l-1.7 3.4 h3.4 Z" fill="#000"/>
<path d="M185.70 522 V524" stroke="#000" stroke-width="0.9"/>
<rect x="194" y="517" width="1" height="13" fill="#000"/>
<ellipse cx="191.5" cy="530.7" rx="3.2" ry="2.45" fill="#000" transform="rotate(-24 191.5 530.7)"/>
<path d="M201.05 520.5 V531.5 M202.95 520.5 V531.5 " stroke="#1c0c18" stroke-width="1.05" fill="none"/>
<path d="M198.95 525.0 L205.05 523.5 M198.95 528.6 L205.05 527.1" stroke="#000" stroke-width="1.9" fill="none"/>
<path d="M202.95 516.4 l-1.7 3.4 h3.4 Z" fill="#000"/>
<path d="M202.95 519 V521" stroke="#000" stroke-width="0.9"/>
</g>
<rect x="317.5" y="568.5" width="242" height="94" fill="#fff" stroke="#000" stroke-width="1"/>
<g clip-path="url(#cpV)">
<rect x="400" y="599" width="10" height="3" fill="#e6e4e4"/>
<rect x="400" y="604" width="10" height="3" fill="#e6e4e4"/>
<rect x="400" y="609" width="10" height="3" fill="#e6e4e4"/>
<rect x="400" y="614" width="10" height="3" fill="#e6e4e4"/>
<rect x="422" y="605" width="10" height="3" fill="#e6e4e4"/>
<rect x="422" y="610" width="10" height="3" fill="#e6e4e4"/>
<rect x="422" y="615" width="10" height="3" fill="#e6e4e4"/>
<rect x="475" y="599" width="10" height="3" fill="#e6e4e4"/>
<rect x="475" y="604" width="10" height="3" fill="#e6e4e4"/>
<rect x="475" y="609" width="10" height="3" fill="#e6e4e4"/>
<rect x="475" y="614" width="10" height="3" fill="#e6e4e4"/>
<rect x="531" y="605" width="10" height="3" fill="#e6e4e4"/>
<rect x="531" y="610" width="10" height="3" fill="#e6e4e4"/>
<rect x="531" y="615" width="10" height="3" fill="#e6e4e4"/>
<rect x="318" y="596" width="242" height="1" fill="#5a3838"/>
<rect x="318" y="601" width="242" height="1" fill="#5a3838"/>
<rect x="318" y="606" width="242" height="1" fill="#5a3838"/>
<rect x="318" y="611" width="242" height="1" fill="#5a3838"/>
<rect x="318" y="616" width="242" height="1" fill="#5a3838"/>
<rect x="318" y="636" width="242" height="1" fill="#5a3838"/>
<rect x="318" y="641" width="242" height="1" fill="#5a3838"/>
<rect x="318" y="646" width="242" height="1" fill="#5a3838"/>
<rect x="318" y="651" width="242" height="1" fill="#5a3838"/>
<rect x="318" y="656" width="242" height="1" fill="#5a3838"/>
<rect x="318" y="676" width="242" height="1" fill="#5a3838"/>
<rect x="318" y="681" width="242" height="1" fill="#5a3838"/>
<rect x="318" y="686" width="242" height="1" fill="#5a3838"/>
<rect x="318" y="691" width="242" height="1" fill="#5a3838"/>
<rect x="318" y="696" width="242" height="1" fill="#5a3838"/>
<rect x="397" y="571" width="13" height="1" fill="#6a4646"/>
<rect x="397" y="576" width="13" height="1" fill="#6a4646"/>
<rect x="397" y="581" width="13" height="1" fill="#6a4646"/>
<rect x="397" y="586" width="13" height="1" fill="#6a4646"/>
<rect x="397" y="591" width="13" height="1" fill="#6a4646"/>
<rect x="397" y="621" width="13" height="1" fill="#6a4646"/>
<rect x="397" y="626" width="13" height="1" fill="#6a4646"/>
<rect x="397" y="631" width="13" height="1" fill="#6a4646"/>
<rect x="432" y="571" width="13" height="1" fill="#6a4646"/>
<rect x="432" y="576" width="13" height="1" fill="#6a4646"/>
<rect x="432" y="581" width="13" height="1" fill="#6a4646"/>
<rect x="432" y="586" width="13" height="1" fill="#6a4646"/>
<rect x="432" y="591" width="13" height="1" fill="#6a4646"/>
<rect x="419" y="621" width="13" height="1" fill="#6a4646"/>
<rect x="419" y="626" width="13" height="1" fill="#6a4646"/>
<rect x="419" y="631" width="13" height="1" fill="#6a4646"/>
<rect x="485" y="571" width="13" height="1" fill="#6a4646"/>
<rect x="485" y="576" width="13" height="1" fill="#6a4646"/>
<rect x="485" y="581" width="13" height="1" fill="#6a4646"/>
<rect x="485" y="586" width="13" height="1" fill="#6a4646"/>
<rect x="485" y="591" width="13" height="1" fill="#6a4646"/>
<rect x="472" y="621" width="13" height="1" fill="#6a4646"/>
<rect x="472" y="626" width="13" height="1" fill="#6a4646"/>
<rect x="472" y="631" width="13" height="1" fill="#6a4646"/>
<rect x="549" y="571" width="11" height="1" fill="#6a4646"/>
<rect x="549" y="576" width="11" height="1" fill="#6a4646"/>
<rect x="549" y="581" width="11" height="1" fill="#6a4646"/>
<rect x="549" y="586" width="11" height="1" fill="#6a4646"/>
<rect x="549" y="591" width="11" height="1" fill="#6a4646"/>
<rect x="528" y="621" width="13" height="1" fill="#6a4646"/>
<rect x="528" y="626" width="13" height="1" fill="#6a4646"/>
<rect x="528" y="631" width="13" height="1" fill="#6a4646"/>
<rect x="399" y="574" width="161" height="2" fill="#000"/>
<rect x="399" y="580" width="161" height="1.8" fill="#000"/>
<rect x="434" y="569" width="1" height="12" fill="#000"/>
<rect x="487" y="569" width="1" height="12" fill="#000"/>
<rect x="551" y="569" width="1" height="12" fill="#000"/>
<path d="M393.5 583 V587.5 H519.5 M533.5 587.5 H560" stroke="#000" stroke-width="1" fill="none"/>
<text x="522" y="591.9" font-family="'DejaVu Sans','Liberation Sans',sans-serif" font-size="9.5" fill="#000">6</text>
<rect x="399" y="616.6" width="161" height="1.8" fill="#000"/>
<rect x="399" y="621.8" width="161" height="1.9" fill="#000"/>
<path d="M393.5 625 V629.5 H525.5 M539.5 629.5 H560" stroke="#000" stroke-width="1" fill="none"/>
<text x="528" y="633.7" font-family="'DejaVu Sans','Liberation Sans',sans-serif" font-size="9.5" fill="#000">7</text>
<rect x="399" y="569" width="1" height="54" fill="#000"/>
<ellipse cx="402.3" cy="597.4" rx="3.1" ry="2.3" fill="#000" transform="rotate(-22 402.3 597.4)"/>
<rect x="421" y="603" width="1" height="20" fill="#000"/>
<ellipse cx="424.3" cy="603.5" rx="3.1" ry="2.3" fill="#000" transform="rotate(-22 424.3 603.5)"/>
<rect x="474" y="597" width="1" height="26" fill="#000"/>
<ellipse cx="477.3" cy="597.4" rx="3.1" ry="2.3" fill="#000" transform="rotate(-22 477.3 597.4)"/>
<rect x="530" y="603" width="1" height="20" fill="#000"/>
<ellipse cx="533.3" cy="603.5" rx="3.1" ry="2.3" fill="#000" transform="rotate(-22 533.3 603.5)"/>
<path d="M394.5 588.5 V605" stroke="#8a2020" stroke-width="1" fill="none"/>
<path d="M394.5 588.0 l-1.7 3.6 h3.4 Z" fill="#000"/>
<path d="M394.5 593 l1.6 2 l-1.6 2 l-1.6 -2 Z" fill="#000"/>
<path d="M394.5 598.4 l1.6 2 l-1.6 2 l-1.6 -2 Z" fill="#000"/>
<path d="M415.5 593.5 V611" stroke="#8a2020" stroke-width="1" fill="none"/>
<path d="M415.5 593.0 l-1.7 3.6 h3.4 Z" fill="#000"/>
<path d="M415.5 598.8 l1.6 2 l-1.6 2 l-1.6 -2 Z" fill="#000"/>
<path d="M415.5 604.3 l1.6 2 l-1.6 2 l-1.6 -2 Z" fill="#000"/>
<path d="M524.5 594.5 V611" stroke="#8a2020" stroke-width="1" fill="none"/>
<path d="M524.5 594.0 l-1.7 3.6 h3.4 Z" fill="#000"/>
<path d="M395.5 646.5 V662" stroke="#2468c8" stroke-width="1" fill="none"/>
<path d="M395.5 646.0 l-1.7 3.6 h3.4 Z" fill="#000"/>
<rect x="399" y="655" width="1" height="7" fill="#000"/>
<ellipse cx="402.3" cy="654.8" rx="3.1" ry="2.3" fill="#000" transform="rotate(-22 402.3 654.8)"/>
<rect x="397" y="661" width="13" height="1" fill="#000"/>
<path d="M455.5 646.5 V662" stroke="#5a3030" stroke-width="1" fill="none"/>
<path d="M455.5 646.0 l-1.7 3.6 h3.4 Z" fill="#000"/>
<rect x="461" y="655" width="1" height="7" fill="#000"/>
<ellipse cx="464.3" cy="654.8" rx="3.1" ry="2.3" fill="#000" transform="rotate(-22 464.3 654.8)"/>
<rect x="459" y="661" width="13" height="1" fill="#000"/>
<path d="M501.5 647 L497 661.5" stroke="#000" stroke-width="1.2" fill="none"/>
<path d="M496 649 q2 2.2 4.8 0.2 M495 654 q2 2.2 4.8 0.2" stroke="#000" stroke-width="1.1" fill="none"/><circle cx="496.3" cy="648.8" r="1.1"/><circle cx="495.3" cy="653.8" r="1.1"/>
<path d="M548.05 650.5 V661.5 M549.95 650.5 V661.5 " stroke="#1c0c18" stroke-width="1.05" fill="none"/>
<path d="M545.95 655.0 L552.05 653.5 M545.95 658.6 L552.05 657.1" stroke="#000" stroke-width="1.9" fill="none"/>
<path d="M549.95 646.4 l-1.7 3.4 h3.4 Z" fill="#000"/>
<path d="M549.95 649 V651" stroke="#000" stroke-width="0.9"/>
<ellipse cx="555" cy="657.3" rx="3" ry="2.2" fill="#000" transform="rotate(-20 555 657.3)"/>
<rect x="557" y="599" width="2" height="3" fill="#7a4a2a"/><rect x="557" y="604" width="2" height="3" fill="#7a4a2a"/>
</g>
<g clip-path="url(#cpV)">
<g transform="translate(321.5 588.5) scale(1.08 1.0)" fill="none" stroke="#6e4c4c" stroke-width="1.9" stroke-linecap="round"><path d="M5.5 23.5 C3.5 22 4 17.5 7.5 17.5 C11 17.5 12.5 21 12 23.5 C11.5 27 8 28.5 5.5 28 C2 27.5 0.5 24 1 21 C1.5 17 5 13.5 7.5 10.5 C9.5 8 10 5 9 2.5 C8.5 1 7.5 0.5 7 1.5 C5.5 4 5.8 8 6.3 12 L8.5 31 C9 34.5 7 36.5 4.5 35.5"/><circle cx="4.3" cy="33.4" r="1.7" fill="#6e4c4c"/></g>
<g transform="translate(321.5 628.5) scale(1.08 1.0)" fill="none" stroke="#6e4c4c" stroke-width="1.9" stroke-linecap="round"><path d="M5.5 23.5 C3.5 22 4 17.5 7.5 17.5 C11 17.5 12.5 21 12 23.5 C11.5 27 8 28.5 5.5 28 C2 27.5 0.5 24 1 21 C1.5 17 5 13.5 7.5 10.5 C9.5 8 10 5 9 2.5 C8.5 1 7.5 0.5 7 1.5 C5.5 4 5.8 8 6.3 12 L8.5 31 C9 34.5 7 36.5 4.5 35.5"/><circle cx="4.3" cy="33.4" r="1.7" fill="#6e4c4c"/></g>
</g>
<rect x="328" y="573.9" width="1" height="11" fill="#4a3a3a"/>
<ellipse cx="326.8" cy="584.6999999999999" rx="1.7" ry="1.3" fill="#4a3a3a" transform="rotate(-20 326.8 584.6999999999999)"/>
<text x="333.5" y="585.9" font-family="'DejaVu Sans','Liberation Sans',sans-serif" font-size="7" font-weight="bold" fill="#6a5a5a" textLength="13.6" lengthAdjust="spacingAndGlyphs">=40</text>
<text x="333.5" y="625.9" font-family="'DejaVu Sans','Liberation Sans',sans-serif" font-size="7" font-weight="bold" fill="#6a5a5a" textLength="13.6" lengthAdjust="spacingAndGlyphs">=40</text>
<g clip-path="url(#cpV)">
<text x="333.5" y="665.9" font-family="'DejaVu Sans','Liberation Sans',sans-serif" font-size="7" font-weight="bold" fill="#6a5a5a" textLength="13.6" lengthAdjust="spacingAndGlyphs">=40</text>
</g>
<text x="380.7" y="605.3" font-family="'Liberation Serif',serif" font-weight="bold" font-size="13.5" fill="#553535" stroke="#553535" stroke-width="0.4" text-anchor="middle">2</text>
<text x="380.7" y="615.9" font-family="'Liberation Serif',serif" font-weight="bold" font-size="13.5" fill="#553535" stroke="#553535" stroke-width="0.4" text-anchor="middle">4</text>
<text x="380.7" y="645.3" font-family="'Liberation Serif',serif" font-weight="bold" font-size="13.5" fill="#553535" stroke="#553535" stroke-width="0.4" text-anchor="middle">2</text>
<text x="380.7" y="655.9" font-family="'Liberation Serif',serif" font-weight="bold" font-size="13.5" fill="#553535" stroke="#553535" stroke-width="0.4" text-anchor="middle">4</text>
<rect x="317" y="663" width="243" height="1" fill="#fff"/>
<rect x="317" y="662" width="243" height="1" fill="#000"/>
<circle cx="80" cy="58" r="3.1" fill="url(#dg)"/>
<circle cx="138" cy="58" r="3.1" fill="url(#dg)"/>
<circle cx="80" cy="190" r="3.1" fill="url(#dg)"/>
<circle cx="138" cy="190" r="3.1" fill="url(#dg)"/>
<circle cx="259" cy="57" r="3.1" fill="url(#dg)"/>
<circle cx="258.3" cy="67" r="3.1" fill="url(#dg)"/>
<circle cx="258" cy="116" r="3.1" fill="url(#dg)"/>
<circle cx="274" cy="170" r="3.1" fill="url(#dg)"/>
<circle cx="342" cy="172" r="3.1" fill="url(#dg)"/>
<circle cx="236" cy="206" r="3.1" fill="url(#dg)"/>
<circle cx="411" cy="206" r="3.1" fill="url(#dg)"/>
<circle cx="245" cy="235" r="3.1" fill="url(#dg)"/>
<circle cx="264" cy="235" r="3.1" fill="url(#dg)"/>
<circle cx="254" cy="284" r="3.1" fill="url(#dg)"/>
<circle cx="294" cy="237" r="3.1" fill="url(#dg)"/>
<circle cx="313" cy="237" r="3.1" fill="url(#dg)"/>
<circle cx="332" cy="237" r="3.1" fill="url(#dg)"/>
<circle cx="351" cy="237" r="3.1" fill="url(#dg)"/>
<circle cx="294" cy="297" r="3.1" fill="url(#dg)"/>
<circle cx="313" cy="297" r="3.1" fill="url(#dg)"/>
<circle cx="332" cy="297" r="3.1" fill="url(#dg)"/>
<circle cx="351" cy="297" r="3.1" fill="url(#dg)"/>
<circle cx="66" cy="256" r="3.1" fill="url(#dg)"/>
<circle cx="99" cy="256" r="3.1" fill="url(#dg)"/>
<circle cx="66" cy="338" r="3.1" fill="url(#dg)"/>
<circle cx="99" cy="338" r="3.1" fill="url(#dg)"/>
<circle cx="222" cy="309" r="3.1" fill="url(#dg)"/>
<circle cx="255" cy="309" r="3.1" fill="url(#dg)"/>
<circle cx="222" cy="391" r="3.1" fill="url(#dg)"/>
<circle cx="255" cy="391" r="3.1" fill="url(#dg)"/>
<circle cx="128" cy="370" r="3.1" fill="url(#dg)"/>
<circle cx="185" cy="440" r="3.1" fill="url(#dg)"/>
<circle cx="43" cy="417" r="3.1" fill="url(#dg)"/>
<circle cx="62" cy="417" r="3.1" fill="url(#dg)"/>
<circle cx="81" cy="417" r="3.1" fill="url(#dg)"/>
<circle cx="100" cy="417" r="3.1" fill="url(#dg)"/>
<circle cx="119" cy="417" r="3.1" fill="url(#dg)"/>
<circle cx="82" cy="466" r="3.1" fill="url(#dg)"/>
<circle cx="88" cy="492" r="3.1" fill="url(#dg)"/>
<circle cx="146" cy="492" r="3.1" fill="url(#dg)"/>
<circle cx="88" cy="624" r="3.1" fill="url(#dg)"/>
<circle cx="146" cy="624" r="3.1" fill="url(#dg)"/>
<circle cx="436" cy="486" r="3.1" fill="url(#dg)"/>
<circle cx="457" cy="486" r="3.1" fill="url(#dg)"/>
<circle cx="478" cy="486" r="3.1" fill="url(#dg)"/>
<circle cx="499" cy="486" r="3.1" fill="url(#dg)"/>
<circle cx="520" cy="486" r="3.1" fill="url(#dg)"/>
<circle cx="541" cy="486" r="3.1" fill="url(#dg)"/>
<circle cx="420" cy="444" r="3.1" fill="url(#dg)"/>
<circle cx="487" cy="443" r="3.1" fill="url(#dg)"/>
<circle cx="543" cy="428" r="3.1" fill="url(#dg)"/>
<circle cx="579" cy="436" r="3.1" fill="url(#dg)"/>
<circle cx="621" cy="445" r="3.1" fill="url(#dg)"/>
<circle cx="488" cy="535" r="3.1" fill="url(#dg)"/>
<circle cx="398" cy="565" r="3.1" fill="url(#dg)"/>
<circle cx="479" cy="565" r="3.1" fill="url(#dg)"/>
<circle cx="398" cy="667" r="3.1" fill="url(#dg)"/>
<circle cx="479" cy="667" r="3.1" fill="url(#dg)"/>
<g clip-path="url(#cpTxt)">
<text x="432.3" y="39.6" font-family="'DejaVu Sans','Liberation Sans',sans-serif" font-size="12.1" fill="#000" textLength="113.4" lengthAdjust="spacing">add-rests-multiseq</text>
<text x="432.3" y="69.6" font-family="'DejaVu Sans','Liberation Sans',sans-serif" font-size="12.1" fill="#000" textLength="375.4" lengthAdjust="spacing">INPUTS 1. List of chord-seqs. 2. List of bpfs(1000*1000): The</text>
<text x="432.3" y="84.6" font-family="'DejaVu Sans','Liberation Sans',sans-serif" font-size="12.1" fill="#000" textLength="350.2" lengthAdjust="spacing">bpfs show trajectories for percentage of rests through the</text>
<text x="432.3" y="99.6" font-family="'DejaVu Sans','Liberation Sans',sans-serif" font-size="12.1" fill="#000" textLength="340.3" lengthAdjust="spacing">input music. If there are too few bpf's for the number of</text>
<text x="432.3" y="114.6" font-family="'DejaVu Sans','Liberation Sans',sans-serif" font-size="12.1" fill="#000" textLength="362.9" lengthAdjust="spacing">chord-seqs, last will be repeated. If there are too many, the</text>
<text x="432.3" y="129.6" font-family="'DejaVu Sans','Liberation Sans',sans-serif" font-size="12.1" fill="#000" textLength="115.9" lengthAdjust="spacing">list will be cropped.</text>
<text x="432.3" y="144.6" font-family="'DejaVu Sans','Liberation Sans',sans-serif" font-size="12.1" fill="#000" textLength="365.0" lengthAdjust="spacing">3. List of 2 numbers: Maximum and minimum percentage of</text>
<text x="432.3" y="159.6" font-family="'DejaVu Sans','Liberation Sans',sans-serif" font-size="12.1" fill="#000" textLength="295.5" lengthAdjust="spacing">rests. 4. List of bpfs(1000*1000): The bpfs show</text>
<text x="432.3" y="174.6" font-family="'DejaVu Sans','Liberation Sans',sans-serif" font-size="12.1" fill="#000" textLength="333.8" lengthAdjust="spacing">trajectories for length of rests through the input music.</text>
<text x="432.3" y="189.6" font-family="'DejaVu Sans','Liberation Sans',sans-serif" font-size="12.1" fill="#000" textLength="335.9" lengthAdjust="spacing">If there are too few bpf's for the number of chord-seqs,</text>
<text x="432.3" y="204.6" font-family="'DejaVu Sans','Liberation Sans',sans-serif" font-size="12.1" fill="#000" textLength="310.4" lengthAdjust="spacing">last will be repeated. If there are too many, the list</text>
<text x="432.3" y="219.6" font-family="'DejaVu Sans','Liberation Sans',sans-serif" font-size="12.1" fill="#000" textLength="376.7" lengthAdjust="spacing">will be cropped. 5. List of 2 numbers: Maximum and minimum</text>
<text x="432.3" y="234.6" font-family="'DejaVu Sans','Liberation Sans',sans-serif" font-size="12.1" fill="#000" textLength="167.6" lengthAdjust="spacing">milliseconds length of rests.</text>
<text x="432.3" y="264.6" font-family="'DejaVu Sans','Liberation Sans',sans-serif" font-size="12.1" fill="#000" textLength="188.6" lengthAdjust="spacing">OUTPUTS 1. List of chord-seqs.</text>
<text x="432.3" y="294.6" font-family="'DejaVu Sans','Liberation Sans',sans-serif" font-size="12.1" fill="#000" textLength="388.8" lengthAdjust="spacing">DESCRIPTION Pierre Boulez has called inserted rests &quot;pockets of</text>
<text x="432.3" y="309.6" font-family="'DejaVu Sans','Liberation Sans',sans-serif" font-size="12.1" fill="#000" textLength="378.5" lengthAdjust="spacing">silence&quot;2. add-rests-multiseq inserts random silences based of</text>
<text x="432.3" y="324.6" font-family="'DejaVu Sans','Liberation Sans',sans-serif" font-size="12.1" fill="#000" textLength="361.6" lengthAdjust="spacing">probability curves for how often rests are inserted, and how</text>
<text x="432.3" y="339.6" font-family="'DejaVu Sans','Liberation Sans',sans-serif" font-size="12.1" fill="#000" textLength="350.7" lengthAdjust="spacing">long they are. As the function has random operations, the</text>
<text x="432.3" y="354.6" font-family="'DejaVu Sans','Liberation Sans',sans-serif" font-size="12.1" fill="#000" textLength="250.5" lengthAdjust="spacing">result will be different at each evaluation.</text>
</g>
</svg>
</body></html>
